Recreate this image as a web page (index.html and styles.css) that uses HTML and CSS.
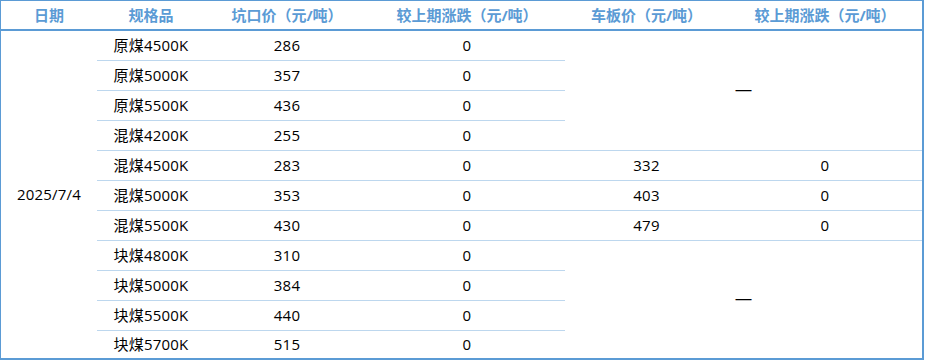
FILE: index.html
```html
<!DOCTYPE html>
<html lang="zh-CN">
<head>
<meta charset="utf-8">
<title>价格表</title>
<link rel="stylesheet" href="styles.css">
</head>
<body>
<div class="frame">
<table class="price-table">
  <colgroup>
    <col class="c-date"><col class="c-spec"><col class="c-pit"><col class="c-chg1"><col class="c-car"><col class="c-chg2">
  </colgroup>
  <thead>
    <tr>
      <th>日期</th><th>规格品</th><th>坑口价（元/吨）</th><th>较上期涨跌（元/吨）</th><th>车板价（元/吨）</th><th>较上期涨跌（元/吨）</th>
    </tr>
  </thead>
  <tbody>
    <tr>
      <td rowspan="11" class="date">2025/7/4</td>
      <td class="line">原煤4500K</td><td class="line">286</td><td class="line">0</td>
      <td rowspan="4" colspan="2" class="line dash">—</td>
    </tr>
    <tr><td class="line">原煤5000K</td><td class="line">357</td><td class="line">0</td></tr>
    <tr><td class="line">原煤5500K</td><td class="line">436</td><td class="line">0</td></tr>
    <tr><td class="line">混煤4200K</td><td class="line">255</td><td class="line">0</td></tr>
    <tr><td class="line">混煤4500K</td><td class="line">283</td><td class="line">0</td><td class="line">332</td><td class="line">0</td></tr>
    <tr><td class="line">混煤5000K</td><td class="line">353</td><td class="line">0</td><td class="line">403</td><td class="line">0</td></tr>
    <tr><td class="line">混煤5500K</td><td class="line">430</td><td class="line">0</td><td class="line">479</td><td class="line">0</td></tr>
    <tr>
      <td class="line">块煤4800K</td><td class="line">310</td><td class="line">0</td>
      <td rowspan="4" colspan="2" class="dash">—</td>
    </tr>
    <tr><td class="line">块煤5000K</td><td class="line">384</td><td class="line">0</td></tr>
    <tr><td class="line">块煤5500K</td><td class="line">440</td><td class="line">0</td></tr>
    <tr class="last"><td>块煤5700K</td><td>515</td><td>0</td></tr>
  </tbody>
</table>
</div>
</body>
</html>
```
FILE: styles.css
```css
html, body {
  margin: 0;
  padding: 0;
  background: #ffffff;
}

.frame {
  width: 921px;
  border-top: 1px solid #5b9bd5;
  border-left: 1px solid #5b9bd5;
  border-right: 2px solid #5b9bd5;
  border-bottom: 2px solid #5b9bd5;
}

.price-table {
  width: 921px;
  table-layout: fixed;
  border-collapse: collapse;
  border-spacing: 0;
  font-family: "Open Sans", "Noto Sans CJK SC", sans-serif;
  font-size: 15px;
  color: #000000;
}

.c-date { width: 96px; }
.c-spec { width: 108px; }
.c-pit { width: 164px; }
.c-chg1 { width: 196px; }
.c-car { width: 163px; }
.c-chg2 { width: 194px; }

.price-table th {
  height: 27px;
  padding: 0 0 1px;
  text-align: center;
  vertical-align: middle;
  font-weight: bold;
  color: #5b9bd5;
  border-bottom: 2px solid #5b9bd5;
  white-space: nowrap;
}

.price-table td {
  height: 27px;
  padding: 0 0 2px;
  text-align: center;
  vertical-align: middle;
  white-space: nowrap;
  letter-spacing: 0.2px;
}

.price-table td.line {
  border-bottom: 1px solid #bdd7ee;
}

.price-table tr.last td {
  height: 25px;
}

.price-table td.dash {
  font-family: "Liberation Sans", sans-serif;
  font-size: 16px;
  letter-spacing: 0;
}
```
